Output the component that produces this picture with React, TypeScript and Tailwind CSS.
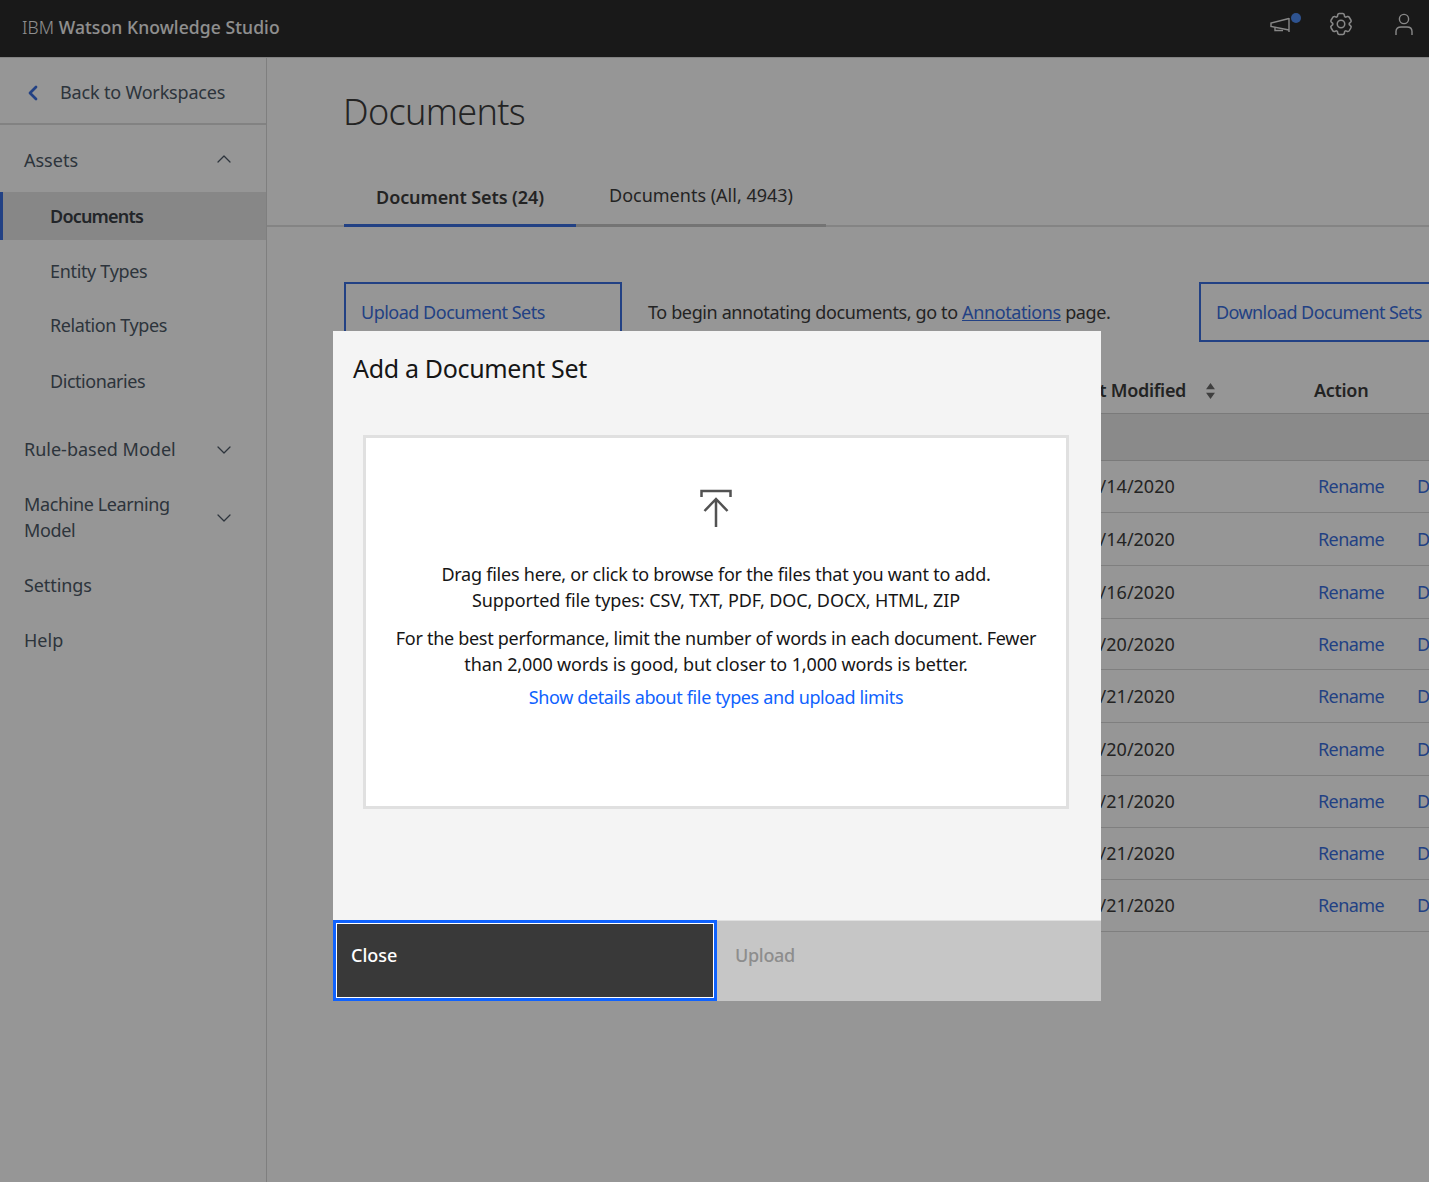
import { ChevronDown, ChevronLeft, ChevronUp } from "lucide-react";

const rows = [
  { date: "01/14/2020", height: "h-[52px]" },
  { date: "01/14/2020", height: "h-[53px]" },
  { date: "01/16/2020", height: "h-[53px]" },
  { date: "01/20/2020", height: "h-[51px]" },
  { date: "01/21/2020", height: "h-[53px]" },
  { date: "01/20/2020", height: "h-[53px]" },
  { date: "01/21/2020", height: "h-[52px]" },
  { date: "01/21/2020", height: "h-[52px]" },
  { date: "01/21/2020", height: "h-[52px]" },
];

const Header = () => (
  <header className="flex h-[58px] shrink-0 items-center justify-between border-b border-[#dddddd] bg-[#2c2c2c] pb-[2px] pl-[22px]">
    <div className="text-[17.5px] tracking-[0.1px] text-[#f4f4f4]">
      <span className="font-light">IBM </span>
      <span className="font-medium">Watson Knowledge Studio</span>
    </div>
    <div className="relative h-full w-[168px] text-[#e8e8e8]">
      <svg className="absolute left-[8px] top-[16px]" width="24" height="18" viewBox="0 0 24 18" fill="none" stroke="currentColor" strokeWidth="1.4">
        <path d="M20 2v14M20 2.5 2 7v3.5l18 3.5" />
        <path d="M6 11.5v3h8" />
      </svg>
      <span className="absolute left-[30px] top-[13px] h-[10px] w-[10px] rounded-full bg-[#4f8df5]" />
      <svg className="absolute left-[68px] top-[12px]" width="24" height="24" viewBox="0 0 32 32" fill="none" stroke="currentColor" strokeWidth="2">
        <path d="M27,16.76c0-.25,0-.5,0-.76s0-.51,0-.77l1.92-1.68A2,2,0,0,0,29.3,11L26.94,7a2,2,0,0,0-1.73-1,2,2,0,0,0-.64.1l-2.43.82a11.35,11.35,0,0,0-1.31-.75l-.51-2.52a2,2,0,0,0-2-1.61H13.64a2,2,0,0,0-2,1.61l-.51,2.52a11.48,11.48,0,0,0-1.32.75L7.43,6.06A2,2,0,0,0,6.79,6,2,2,0,0,0,5.06,7L2.7,11a2,2,0,0,0,.41,2.51L5,15.24c0,.25,0,.5,0,.76s0,.51,0,.77L3.11,18.45A2,2,0,0,0,2.7,21L5.06,25a2,2,0,0,0,1.73,1,2,2,0,0,0,.64-.1l2.43-.82a11.35,11.35,0,0,0,1.31.75l.51,2.52a2,2,0,0,0,2,1.61h4.72a2,2,0,0,0,2-1.61l.51-2.52a11.48,11.48,0,0,0,1.32-.75l2.42.82a2,2,0,0,0,.64.1,2,2,0,0,0,1.73-1L29.3,21a2,2,0,0,0-.41-2.51Z" />
        <circle cx="16" cy="16" r="5" />
      </svg>
      <svg className="absolute left-[134px] top-[12px]" width="18" height="24" viewBox="0 0 18 24" fill="none" stroke="currentColor" strokeWidth="1.4">
        <circle cx="9" cy="7" r="4.6" />
        <path d="M1 23v-3.5C1 16.5 3 15 6 15h6c3 0 5 1.5 5 4.5V23" />
      </svg>
    </div>
  </header>
);

const Sidebar = () => (
  <aside className="flex w-[267px] shrink-0 flex-col border-r border-[#d8d8d8] bg-white text-[18px] text-[#4d5966]">
    <div className="flex h-[67px] shrink-0 items-center border-b-2 border-[#dddddd] pl-[21px] pt-[4px]">
      <ChevronLeft className="h-[24px] w-[24px] text-[#3b6fe0]" strokeWidth={2.75} />
      <span className="ml-[15px] tracking-[-0.17px]">Back to Workspaces</span>
    </div>
    <div className="flex h-[67px] shrink-0 items-center justify-between pl-[24px] pr-[30px]">
      <span className="pt-[3px]">Assets</span>
      <ChevronUp className="h-[24px] w-[24px]" strokeWidth={1.25} />
    </div>
    <div className="flex h-[48px] shrink-0 items-center border-l-[3px] border-[#3b6fe0] bg-[#e6e6e6] pl-[47px] font-semibold tracking-[-0.8px] text-[#3a3f47]">
      Documents
    </div>
    <div className="flex h-[62px] shrink-0 items-center pl-[50px] tracking-[-0.33px]">Entity Types</div>
    <div className="flex h-[46px] shrink-0 items-center pl-[50px] tracking-[-0.4px]">Relation Types</div>
    <div className="flex h-[66px] shrink-0 items-center pl-[50px] tracking-[-0.45px]">Dictionaries</div>
    <div className="flex h-[71px] shrink-0 items-center justify-between pl-[24px] pr-[30px]">
      <span>Rule-based Model</span>
      <ChevronDown className="h-[24px] w-[24px]" strokeWidth={1.25} />
    </div>
    <div className="flex h-[65px] shrink-0 items-center justify-between pl-[24px] pr-[30px]">
      <span className="w-[170px] leading-[25.6px] tracking-[-0.38px]">Machine Learning Model</span>
      <ChevronDown className="h-[24px] w-[24px]" strokeWidth={1.25} />
    </div>
    <div className="flex h-[70px] shrink-0 items-center pl-[24px] tracking-[-0.1px]">Settings</div>
    <div className="flex h-[40px] shrink-0 items-center pl-[24px]">Help</div>
  </aside>
);

const Content = () => (
  <main className="min-w-0 flex-1 overflow-hidden bg-white text-[18px] text-[#3d3d3d]">
    <h1 className="h-[113px] pl-[76px] pt-[30px] text-[36px] font-light leading-[48px] tracking-[-0.67px]">Documents</h1>
    <div className="flex h-[56px] items-stretch border-b-2 border-[#e0e0e0] pl-[77px]">
      <div className="mb-[-2px] flex w-[232px] items-center justify-center border-b-[3px] border-[#3b6fe0] font-semibold tracking-[-0.1px]">
        Document Sets (24)
      </div>
      <div className="mb-[-2px] flex w-[250px] items-center justify-center border-b-[3px] border-[#c6c6c6] pb-[5px]">
        Documents (All, 4943)
      </div>
    </div>
    <div className="mt-[55px] flex h-[60px] items-center whitespace-nowrap pl-[77px]">
      <div className="flex h-full w-[278px] shrink-0 items-center border-2 border-[#3b6fe0] pl-[15px] tracking-[-0.5px] text-[#3b6fe0]">
        Upload Document Sets
      </div>
      <p className="ml-[26px] w-[551px] shrink-0 tracking-[-0.38px]">
        To begin annotating documents, go to <span className="text-[#3b6fe0] underline">Annotations</span> page.
      </p>
      <div className="flex h-full w-[240px] shrink-0 items-center border-2 border-[#3b6fe0] pl-[15px] tracking-[-0.58px] text-[#3b6fe0]">
        Download Document Sets
      </div>
    </div>
    <div className="mt-[23px] w-[1200px] pl-[77px]">
      <div className="flex h-[49px] items-center border-b border-[#d0d0d0] pt-[3px] font-semibold">
        <span className="w-[727px] shrink-0" />
        <span className="flex w-[243px] shrink-0 items-center whitespace-nowrap tracking-[-0.3px]">
          Last Modified
          <svg className="ml-[20px]" width="9" height="16" viewBox="0 0 10 18" fill="#6b6b6b">
            <path d="M5 0 10 7H0ZM0 11h10L5 18Z" />
          </svg>
        </span>
        <span className="tracking-[-0.3px]">Action</span>
      </div>
      <div className="h-[47px] border-b border-[#d0d0d0] bg-[#ebebeb]" />
      {rows.map((row, i) => (
        <div key={i} className={`flex items-center border-b border-[#d8d8d8] ${row.height}`}>
          <span className="w-[727px] shrink-0" />
          <span className="w-[243px] shrink-0 whitespace-nowrap pl-[8px]">{row.date}</span>
          <span className="ml-[4px] w-[99px] shrink-0 tracking-[-0.6px] text-[#3b6fe0]">Rename</span>
          <span className="text-[#3b6fe0]">Delete</span>
        </div>
      ))}
    </div>
  </main>
);

const UploadModal = () => (
  <div className="absolute left-[333px] top-[331px] flex h-[670px] w-[768px] flex-col bg-[#f4f4f4]">
    <h2 className="h-[104px] shrink-0 pl-[20px] pt-[20px] text-[25px] leading-[34px] tracking-[-0.33px] text-[#161616]">Add a Document Set</h2>
    <div className="ml-[30px] flex h-[374px] w-[706px] shrink-0 flex-col items-center border-[3px] border-[#e0e0e0] bg-white pt-[51px] text-center text-[18px] leading-[25.6px] text-[#161616]">
      <svg width="32" height="38" viewBox="0 0 32 38" fill="none" stroke="#525252" strokeWidth="2.5">
        <path d="M1.5 8V2h29v6" />
        <path d="M16 38V10M4.5 22 16 10l11.5 12" />
      </svg>
      <p className="mt-[35px]">
        <span className="tracking-[-0.24px]">Drag files here, or click to browse for the files that you want to add.</span>
        <br />
        <span className="tracking-[-0.09px]">Supported file types: CSV, TXT, PDF, DOC, DOCX, HTML, ZIP</span>
      </p>
      <p className="mt-[13px]">
        <span className="tracking-[-0.29px]">For the best performance, limit the number of words in each document. Fewer</span>
        <br />
        <span className="tracking-[-0.13px]">than 2,000 words is good, but closer to 1,000 words is better.</span>
      </p>
      <p className="mt-[8px] tracking-[-0.375px] text-[#0f62fe]">Show details about file types and upload limits</p>
    </div>
    <div className="mt-auto flex h-[81px] shrink-0 text-[18px]">
      <div className="w-[384px] border-[3px] border-[#0f62fe] bg-[#393939] pl-[15px] pt-[19px] text-white outline outline-1 -outline-offset-4 outline-white">
        <span className="font-medium">Close</span>
      </div>
      <div className="flex-1 border-t border-[#e0e0e0] bg-[#c6c6c6] pl-[18px] pt-[21px] font-medium tracking-[-0.3px] text-[#8d8d8d]">Upload</div>
    </div>
  </div>
);

export default function App() {
  return (
    <div className="relative flex h-[1182px] w-full flex-col overflow-hidden font-['Noto_Sans','Liberation_Sans',sans-serif]">
      <Header />
      <div className="flex min-h-0 flex-1">
        <Sidebar />
        <Content />
      </div>
      <div className="absolute inset-0 bg-[rgba(0,0,0,0.41)]" />
      <UploadModal />
    </div>
  );
}
